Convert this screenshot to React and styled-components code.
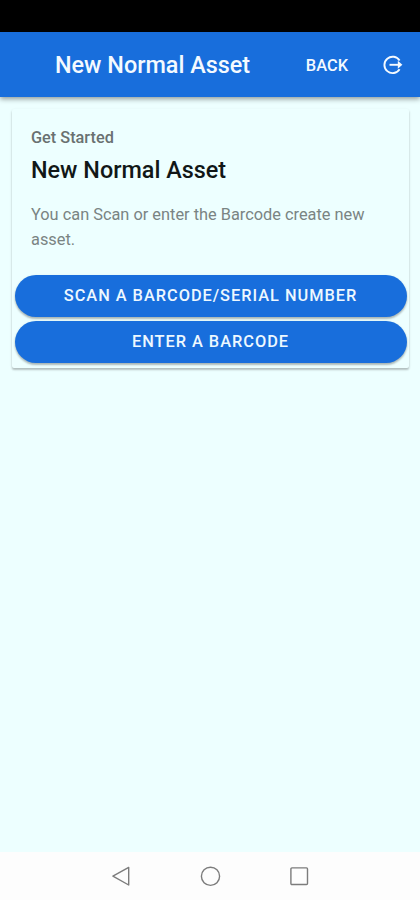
import React from 'react';
import styled, { createGlobalStyle } from 'styled-components';

const GlobalStyle = createGlobalStyle`
  body {
    margin: 0;
    background-color: #EDFFFF;
    font-family: Roboto, "Liberation Sans", sans-serif;
  }
`;

const Screen = styled.div`
  display: flex;
  flex-direction: column;
  height: 900px;
  background-color: #EDFFFF;
`;

const StatusBar = styled.div`
  flex: none;
  height: 32px;
  background-color: #000;
`;

const Toolbar = styled.header`
  display: flex;
  flex: none;
  align-items: center;
  height: 65px;
  padding: 0 17px 0 55px;
  box-sizing: border-box;
  background-color: #186EDC;
  color: #F4FAFF;
  box-shadow: 0 2px 5px rgba(0, 0, 0, .4);
`;

const ToolbarTitle = styled.h1`
  flex: 1;
  margin: 0;
  padding-top: 1px;
  font-size: 23.4px;
  font-weight: 500;
  line-height: 28px;
  white-space: nowrap;
`;

const ToolbarButton = styled.button`
  display: flex;
  align-items: center;
  margin: 0;
  padding: 2px 0 0;
  border: 0;
  background: none;
  color: inherit;
  font-family: inherit;
  font-size: 16.4px;
  font-weight: 500;
  line-height: 20px;
  text-transform: uppercase;

  & + & {
    margin-left: 35px;
    padding-top: 0;
  }
`;

const Content = styled.main`
  flex: 1;
  padding: 12px 11px 0 12px;
`;

const Card = styled.section`
  height: 259px;
  box-sizing: border-box;
  border-radius: 2px;
  box-shadow: 0 2px 2px rgba(0, 0, 0, .2), 0 1px 3px rgba(0, 0, 0, .1);
`;

const CardHeader = styled.div`
  padding: 19px 19px 0;
`;

const CardSubtitle = styled.div`
  color: #697171;
  font-size: 16.3px;
  font-weight: 500;
  line-height: 20px;
`;

const CardTitle = styled.h2`
  margin: 8px 0 0;
  color: #111717;
  font-size: 23.4px;
  font-weight: 500;
  line-height: 28px;
`;

const CardText = styled.p`
  margin: 0;
  padding: 19px 19px 22.5px;
  color: #7A8483;
  font-size: 16.35px;
  line-height: 24.5px;
`;

const Actions = styled.div`
  display: flex;
  flex-direction: column;
  gap: 4.5px;
  padding: 0 2.5px;
`;

const ActionButton = styled.button`
  height: 42px;
  padding: 0 0 1px;
  border: 0;
  border-radius: 21px;
  background-color: #186EDC;
  color: #EDF8FF;
  font-family: inherit;
  font-size: 16.35px;
  font-weight: 500;
  letter-spacing: .06em;
  text-transform: uppercase;
  box-shadow: 0 2px 2px rgba(0, 0, 0, .22), 0 1px 3px rgba(0, 0, 0, .12);
`;

const NavigationBar = styled.nav`
  display: flex;
  flex: none;
  justify-content: center;
  align-items: center;
  gap: 65px;
  height: 48px;
  background-color: #FDFDFD;

  svg {
    fill: none;
    stroke: #7C7C7C;
    stroke-width: 1.4;
    stroke-linejoin: round;
  }
`;

const LogoutIcon = () => (
  <svg width="20" height="20" viewBox="0 0 20 20" fill="none" stroke="currentColor" strokeWidth="1.9">
    <path d="M16.6 5.6A8.2 8.2 0 1 0 16.6 14.2" />
    <path d="M6.5 9.8H16" />
    <path d="M14.8 5.8L19.4 9.8L14.8 13.8Z" fill="currentColor" stroke="none" />
  </svg>
);

const App = () => (
  <Screen>
    <GlobalStyle />
    <StatusBar />
    <Toolbar>
      <ToolbarTitle>New Normal Asset</ToolbarTitle>
      <ToolbarButton>Back</ToolbarButton>
      <ToolbarButton aria-label="Log out"><LogoutIcon /></ToolbarButton>
    </Toolbar>
    <Content>
      <Card>
        <CardHeader>
          <CardSubtitle>Get Started</CardSubtitle>
          <CardTitle>New Normal Asset</CardTitle>
        </CardHeader>
        <CardText>You can Scan or enter the Barcode create new asset.</CardText>
        <Actions>
          <ActionButton>Scan a Barcode/Serial Number</ActionButton>
          <ActionButton>Enter a Barcode</ActionButton>
        </Actions>
      </Card>
    </Content>
    <NavigationBar>
      <svg width="24" height="24" viewBox="0 0 24 24">
        <path d="M19.7 3.4V21L3.9 12.2Z" />
      </svg>
      <svg width="24" height="24" viewBox="0 0 24 24">
        <circle cx="12.5" cy="12.3" r="9.1" />
      </svg>
      <svg width="24" height="24" viewBox="0 0 24 24">
        <rect x="3.9" y="3.9" width="16.6" height="16.6" rx="1" />
      </svg>
    </NavigationBar>
  </Screen>
);

export default App;
